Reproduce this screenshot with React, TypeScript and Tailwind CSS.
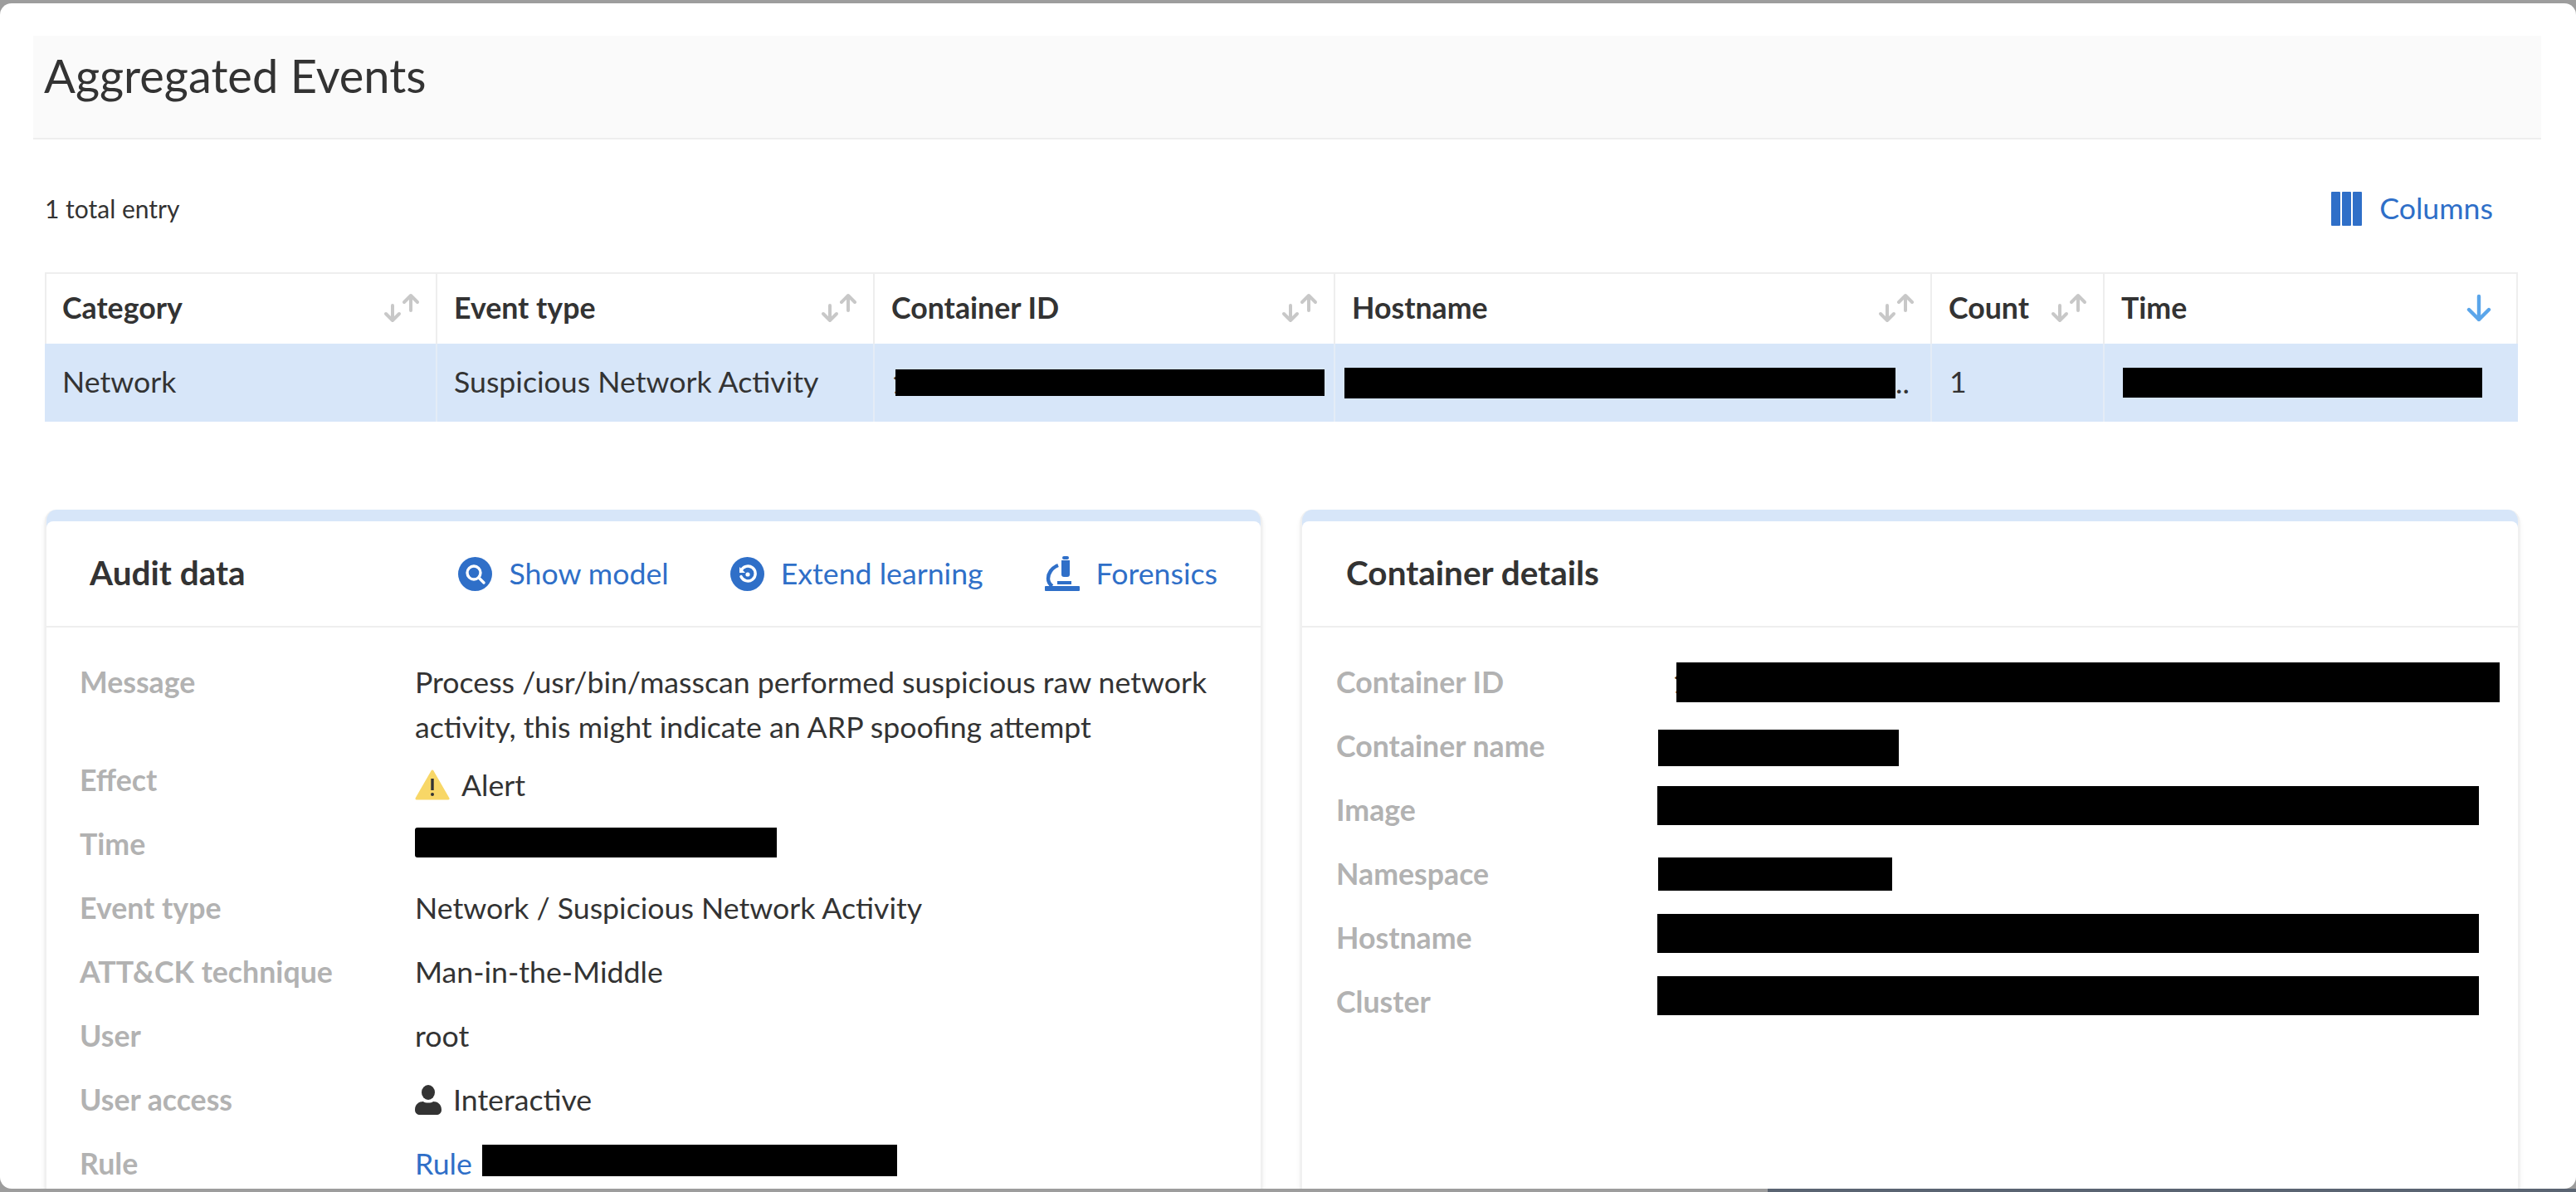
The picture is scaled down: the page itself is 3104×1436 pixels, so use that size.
import React from 'react';

const SortIcon = () => (
  <svg width="44" height="36" viewBox="0 0 44 36" fill="none" stroke="#c8c8c8" strokeWidth="4" strokeLinecap="round" strokeLinejoin="round">
    <path d="M11 15v18M3 25l8 8 8-8" />
    <path d="M33 21V3M25 11l8-8 8 8" />
  </svg>
);

const Redacted = ({ className }: { className: string }) => <div className={`bg-black shrink-0 ${className}`} />;

interface HeadCell {
  label: string;
  sorted?: boolean;
}

const headCells: HeadCell[] = [
  { label: 'Category' },
  { label: 'Event type' },
  { label: 'Container ID' },
  { label: 'Hostname' },
  { label: 'Count' },
  { label: 'Time', sorted: true },
];

const Row = ({ label, children, className }: { label: string; children: React.ReactNode; className: string }) => (
  <div className={`flex items-start ${className}`}>
    <div className="w-[404px] shrink-0 font-bold text-[#b2b2b2]">{label}</div>
    <div className="min-w-0 flex-1">{children}</div>
  </div>
);

const DetailRow = ({ label, children }: { label: string; children: React.ReactNode }) => (
  <div className="flex h-[77px] items-center">
    <div className="w-[387px] shrink-0 font-bold text-[#b2b2b2]">{label}</div>
    {children}
  </div>
);

const App: React.FC = () => {
  return (
    <div className="relative h-[1436px] w-[3104px] overflow-hidden bg-[#9d9d9d] pt-[4px] pb-[4px] font-['Lato',sans-serif] text-[35.7px] leading-[54px] text-[#333333]">
      <div className="h-full overflow-hidden rounded-[14px] bg-white pt-[39px] pr-[42px] pl-[40px]">
        {/* Page title */}
        <div className="flex h-[125px] items-start border-b-2 border-[#eeeeee] bg-[#fafafa] pt-[16px] pl-[13px]">
          <h1 className="text-[56px] leading-[64px]">Aggregated Events</h1>
        </div>

        {/* Toolbar */}
        <div className="flex h-[160px] items-center justify-between pt-[6px] pr-[58px] pl-[14px]">
          <span className="text-[30px]">1 total entry</span>
          <button className="flex items-center gap-[21px] text-[#2f6fc8]">
            <svg width="37" height="41" viewBox="0 0 37 41" fill="#2f6fc8">
              <rect x="0" y="0" width="11" height="41" rx="1" />
              <rect x="13" y="0" width="11" height="41" rx="1" />
              <rect x="26" y="0" width="11" height="41" rx="1" />
            </svg>
            Columns
          </button>
        </div>

        {/* Table */}
        <div className="ml-[14px] w-[2980px] border-t-2 border-[#eeeeee]">
          <div className="grid h-[84px] grid-cols-[473px_527px_555px_719px_208px_498px]">
            {headCells.map((cell) => (
              <div key={cell.label} className="flex items-center justify-between border-r-2 border-[#eeeeee] pr-[19px] pb-[2px] pl-[20px] font-bold first:border-l-2 first:pl-[19px]">
                <span>{cell.label}</span>
                {cell.sorted ? (
                  <svg width="32" height="34" viewBox="0 0 32 34" fill="none" stroke="#5aa5ea" strokeWidth="4.4" strokeLinecap="round" strokeLinejoin="round" className="mr-[10px]">
                    <path d="M16 3v28M4 19l12 12 12-12" />
                  </svg>
                ) : (
                  <SortIcon />
                )}
              </div>
            ))}
          </div>
          <div className="grid h-[94px] grid-cols-[473px_527px_555px_719px_208px_498px] bg-[#d7e6f9]">
            <div className="flex items-center border-r-2 border-[#e4ecf6] pb-[2px] pl-[21px]">Network</div>
            <div className="flex items-center border-r-2 border-[#e4ecf6] pb-[2px] pl-[20px]">Suspicious Network Activity</div>
            <div className="flex items-center border-r-2 border-[#e4ecf6] pl-[20px]">
              <span>1</span>
              <Redacted className="-ml-[16px] h-[32px] w-[517px]" />
            </div>
            <div className="flex items-center border-r-2 border-[#e4ecf6] pl-[11px]">
              <Redacted className="h-[37px] w-[664px]" />
              <span>..</span>
            </div>
            <div className="flex items-center border-r-2 border-[#e4ecf6] pb-[2px] pl-[21px]">1</div>
            <div className="flex items-center pl-[22px]">
              <Redacted className="h-[36px] w-[433px]" />
            </div>
          </div>
        </div>

        {/* Cards */}
        <div className="mt-[106px] ml-[14px] flex w-[2984px] gap-[46px]">
          <section className="w-[1467px] rounded-t-[14px] border-x-2 border-[#f0f0f0] bg-[#d7e6f9] pt-[14px] shadow-md">
            <div className="h-[900px] rounded-t-[8px] bg-white">
              <div className="flex h-[128px] items-center justify-between border-b-2 border-[#eeeeee] pr-[52px] pl-[52px]">
                <h2 className="pb-[2px] text-[40.5px] font-bold">Audit data</h2>
                <div className="flex items-center gap-[74px] text-[#2f6fc8]">
                  <button className="flex items-center gap-[20px]">
                    <svg width="41" height="41" viewBox="0 0 41 41">
                      <circle cx="20.5" cy="20.5" r="20.5" fill="#2f6fc8" />
                      <circle cx="19" cy="19" r="8" fill="none" stroke="white" strokeWidth="3.4" />
                      <path d="M25 25l6 6" stroke="white" strokeWidth="3.4" strokeLinecap="round" />
                    </svg>
                    Show model
                  </button>
                  <button className="flex items-center gap-[20px]">
                    <svg width="41" height="41" viewBox="0 0 41 41" fill="none">
                      <circle cx="20.5" cy="20.5" r="20.5" fill="#2f6fc8" />
                      <path d="M13.5 15.5a9 9 0 1 1-1 7" stroke="white" strokeWidth="3.4" strokeLinecap="round" transform="rotate(-8 20 20)" />
                      <path d="M11 12v7h7z" fill="white" />
                      <circle cx="21" cy="21" r="2.6" fill="white" />
                    </svg>
                    Extend learning
                  </button>
                  <button className="flex items-center gap-[20px]">
                    <svg width="42" height="42" viewBox="0 0 42 42" fill="#2f6fc8">
                      <rect x="21" y="0" width="8" height="4" rx="2" />
                      <path d="M20 5h10v17a3 3 0 0 1-3 3h-4a3 3 0 0 1-3-3z" />
                      <path d="M16 11C8 14 4 21 4 27c0 4 2 7 5 9" fill="none" stroke="#2f6fc8" strokeWidth="4.4" />
                      <rect x="15" y="30" width="17" height="4" />
                      <rect x="0" y="36" width="42" height="6" rx="1" />
                    </svg>
                    Forensics
                  </button>
                </div>
              </div>
              <div className="pt-[39px] pl-[40px]">
                <Row label="Message" className="h-[118px]">
                  <p className="w-[980px]">Process /usr/bin/masscan performed suspicious raw network activity, this might indicate an ARP spoofing attempt</p>
                </Row>
                <Row label="Effect" className="h-[77px]">
                  <div className="flex items-center gap-[14px] pt-[6px]">
                    <svg width="42" height="38" viewBox="0 0 42 38" className="shrink-0">
                      <path d="M21 2L40 35H2z" fill="#f8d767" stroke="#f8d767" strokeWidth="3" strokeLinejoin="round" />
                      <path d="M21 11v14" stroke="#333333" strokeWidth="3.4" />
                      <circle cx="21" cy="30" r="2" fill="#333333" />
                    </svg>
                    Alert
                  </div>
                </Row>
                <Row label="Time" className="h-[77px]">
                  <Redacted className="mt-[7px] h-[36px] w-[436px] rounded-l-[3px]" />
                </Row>
                <Row label="Event type" className="h-[77px]">Network / Suspicious Network Activity</Row>
                <Row label="ATT&CK technique" className="h-[77px]">Man-in-the-Middle</Row>
                <Row label="User" className="h-[77px]">root</Row>
                <Row label="User access" className="h-[77px]">
                  <div className="flex items-center gap-[14px]">
                    <svg width="32" height="36" viewBox="0 0 32 36" fill="#333333" className="shrink-0">
                      <ellipse cx="16" cy="9" rx="8" ry="9" />
                      <path d="M0 30c0-7 5-10 10-10 2 2 10 2 12 0 5 0 10 3 10 10 0 4-3 6-6 6H6c-3 0-6-2-6-6z" />
                    </svg>
                    Interactive
                  </div>
                </Row>
                <Row label="Rule" className="h-[77px]">
                  <div className="flex items-start">
                    <span className="w-[81px] text-[#2f6fc8]">Rule</span>
                    <Redacted className="mt-[4px] h-[38px] w-[500px]" />
                  </div>
                </Row>
              </div>
            </div>
          </section>

          <section className="w-[1469px] rounded-t-[14px] border-x-2 border-[#f0f0f0] bg-[#d7e6f9] pt-[14px] shadow-md">
            <div className="h-[900px] rounded-t-[8px] bg-white">
              <div className="flex h-[128px] items-center border-b-2 border-[#eeeeee] pl-[53px]">
                <h2 className="pb-[2px] text-[40.5px] font-bold">Container details</h2>
              </div>
              <div className="pt-[27px] pl-[41px]">
                <DetailRow label="Container ID">
                  <span className="ml-[18px]">1</span>
                  <Redacted className="-ml-[16px] h-[48px] w-[992px]" />
                </DetailRow>
                <DetailRow label="Container name">
                  <Redacted className="mt-[5px] ml-[1px] h-[44px] w-[290px]" />
                </DetailRow>
                <DetailRow label="Image">
                  <Redacted className="mb-[10px] h-[47px] w-[990px]" />
                </DetailRow>
                <DetailRow label="Namespace">
                  <Redacted className="ml-[1px] h-[40px] w-[282px]" />
                </DetailRow>
                <DetailRow label="Hostname">
                  <Redacted className="mb-[10px] h-[47px] w-[990px]" />
                </DetailRow>
                <DetailRow label="Cluster">
                  <Redacted className="mb-[14px] h-[47px] w-[990px]" />
                </DetailRow>
              </div>
            </div>
          </section>
        </div>
      </div>
      <div className="absolute right-0 bottom-0 h-[4px] w-[974px] bg-[#5a6472]" />
    </div>
  );
};

export default App;
